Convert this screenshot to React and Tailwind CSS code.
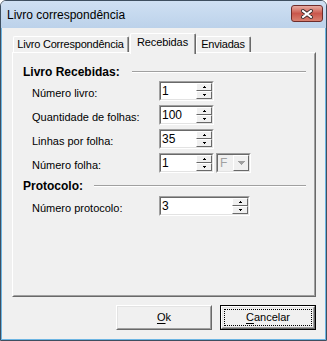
import React from 'react';

const font = { fontFamily: '"Liberation Sans", Arial, sans-serif' };

const Sunken = ({ className = '', inner = 'bg-white', children }) => (
  <div className={`border border-t-[#a0a0a0] border-l-[#a0a0a0] border-r-white border-b-white ${className}`}>
    <div className={`h-full w-full flex border border-t-[#696969] border-l-[#696969] border-r-[#e3e3e3] border-b-[#e3e3e3] ${inner}`}>
      {children}
    </div>
  </div>
);

const ArrowUp = () => (
  <svg width="3" height="2" shapeRendering="crispEdges">
    <rect x="1" y="0" width="1" height="1" fill="#000" />
    <rect x="0" y="1" width="3" height="1" fill="#000" />
  </svg>
);

const ArrowDown = () => (
  <svg width="3" height="2" shapeRendering="crispEdges">
    <rect x="0" y="0" width="3" height="1" fill="#000" />
    <rect x="1" y="1" width="1" height="1" fill="#000" />
  </svg>
);

const SpinButton = ({ children }) => (
  <div className="h-[8px] border border-t-white border-l-white border-r-[#696969] border-b-[#696969] bg-[#f0f0f0] flex items-center justify-center">
    {children}
  </div>
);

const SpinEdit = ({ value, width }) => (
  <Sunken className={`${width} h-[20px]`}>
    <div className="flex-1 bg-white pl-[1px] text-[12px] leading-[16px] text-black">{value}</div>
    <div className="w-[16px] flex flex-col bg-[#f0f0f0]">
      <SpinButton>
        <ArrowUp />
      </SpinButton>
      <SpinButton>
        <ArrowDown />
      </SpinButton>
    </div>
  </Sunken>
);

const DisabledCombo = () => (
  <Sunken className="w-[35px] h-[20px] ml-[2px]" inner="bg-[#f0f0f0]">
    <div className="flex-1 pl-[2px] text-[12px] leading-[16px] text-[#a0a0a0]">F</div>
    <div className="w-[16px] h-[16px] border border-t-white border-l-white border-r-[#696969] border-b-[#696969] bg-[#f0f0f0] flex items-center justify-center">
      <svg width="7" height="4" shapeRendering="crispEdges">
        <rect x="0" y="0" width="7" height="1" fill="#a0a0a0" />
        <rect x="1" y="1" width="5" height="1" fill="#a0a0a0" />
        <rect x="2" y="2" width="3" height="1" fill="#a0a0a0" />
        <rect x="3" y="3" width="1" height="1" fill="#a0a0a0" />
      </svg>
    </div>
  </Sunken>
);

const GroupHeader = ({ title, gap }) => (
  <div className="flex items-center h-[14px]">
    <span className="font-bold text-[12px] leading-[14px] text-black">{title}</span>
    <div className={`flex-1 ${gap} h-[2px] border-t border-t-[#a0a0a0] border-b border-b-white`} />
  </div>
);

const Row = ({ label, children }) => (
  <div className="flex items-center h-[20px]">
    <span className="w-[127px] pt-[3px] text-[11px] leading-[14px] text-black">{label}</span>
    {children}
  </div>
);

const Tab = ({ label, width, selected }) =>
  selected ? (
    <div className={`${width} h-[21px] -mb-[2px] relative z-10 bg-[#f0f0f0] border-l border-t border-white border-r border-r-[#696969] rounded-t-[2px]`}>
      <div className="h-full border-r border-r-[#a0a0a0] flex items-center justify-center pb-[3px] text-[11px] tracking-[-0.1px]">
        {label}
      </div>
    </div>
  ) : (
    <div className={`${width} h-[16px] bg-[#f0f0f0] border-l border-t border-white border-r border-r-[#696969] rounded-t-[2px]`}>
      <div className="h-full border-r border-r-[#a0a0a0] flex items-center justify-center text-[11px] tracking-[-0.2px]">
        {label}
      </div>
    </div>
  );

const Button = ({ children, isDefault }) => (
  <div className={`w-[96px] h-[25px] ${isDefault ? 'border border-black' : ''}`}>
    <div className="h-full border border-t-white border-l-white border-r-[#696969] border-b-[#696969]">
      <div className={`h-full border border-t-[#e3e3e3] border-l-[#e3e3e3] border-r-[#a0a0a0] border-b-[#a0a0a0] bg-[#f0f0f0] flex ${isDefault ? 'p-[1px]' : ''}`}>
        <div className={`flex-1 flex items-center justify-center text-[11px] text-black ${isDefault ? 'border border-dotted border-black' : ''}`}>
          {children}
        </div>
      </div>
    </div>
  </div>
);

export default function App() {
  return (
    <div style={font} className="w-[327px] h-[341px] flex flex-col border border-[#3e4f60] rounded-t-[6px] overflow-hidden text-black select-none">
      <div className="h-[27px] shrink-0 flex items-center pl-[6px] pr-[3px] bg-linear-to-b from-[#cfe0f3] to-[#bcd2ea]">
        <span className="pt-[1px] text-[12px]">Livro correspondência</span>
        <div className="ml-auto self-start mt-[4px] w-[32px] h-[17px] rounded-[3px] border border-[#6e2c2a] bg-linear-to-b from-[#e6aba2] via-[#c9574c] to-[#d98070] flex items-center justify-center">
          <svg width="14" height="10" viewBox="0 0 14 10">
            <path d="M3 2 L11 8 M11 2 L3 8" stroke="#3a2a2a" strokeWidth="4" strokeLinecap="round" />
            <path d="M3 2 L11 8 M11 2 L3 8" stroke="#ffffff" strokeWidth="2" strokeLinecap="square" />
          </svg>
        </div>
      </div>

      <div className="flex-1 flex flex-col bg-[#f0f0f0] border-l border-r border-b border-[#6cb5e3] pl-[10px] pt-[5px]">
        <div className="w-[304px] h-[19px] flex items-end pl-[1px]">
          <Tab label="Livro Correspondência" width="w-[116px]" />
          <div className="w-[1px]" />
          <Tab label="Recebidas" width="w-[66px]" selected />
          <Tab label="Enviadas" width="w-[55px]" />
        </div>

        <div className="w-[304px] h-[245px] border border-t-white border-l-white border-r-[#696969] border-b-[#696969]">
          <div className="h-full border border-t-[#f0f0f0] border-l-[#f0f0f0] border-r-[#a0a0a0] border-b-[#a0a0a0] flex flex-col pl-[9px] pr-[8px] pt-[11px]">
            <GroupHeader title="Livro Recebidas:" gap="ml-[12px]" />
            <div className="flex flex-col gap-[4px] mt-[2px] pl-[9px]">
              <Row label="Número livro:">
                <SpinEdit value="1" width="w-[55px]" />
              </Row>
              <Row label="Quantidade de folhas:">
                <SpinEdit value="100" width="w-[55px]" />
              </Row>
              <Row label="Linhas por folha:">
                <SpinEdit value="35" width="w-[55px]" />
              </Row>
              <Row label="Número folha:">
                <SpinEdit value="1" width="w-[55px]" />
                <DisabledCombo />
              </Row>
            </div>
            <div className="mt-[6px]">
              <GroupHeader title="Protocolo:" gap="ml-[11px]" />
            </div>
            <div className="flex flex-col mt-[3px] pl-[9px]">
              <Row label="Número protocolo:">
                <SpinEdit value="3" width="w-[91px]" />
              </Row>
            </div>
          </div>
        </div>

        <div className="w-[304px] flex justify-end gap-[8px] mt-[8px]">
          <Button>
            <span>
              <span className="underline underline-offset-2">O</span>k
            </span>
          </Button>
          <Button isDefault>
            <span>
              <span className="underline underline-offset-2">C</span>ancelar
            </span>
          </Button>
        </div>
      </div>
    </div>
  );
}
